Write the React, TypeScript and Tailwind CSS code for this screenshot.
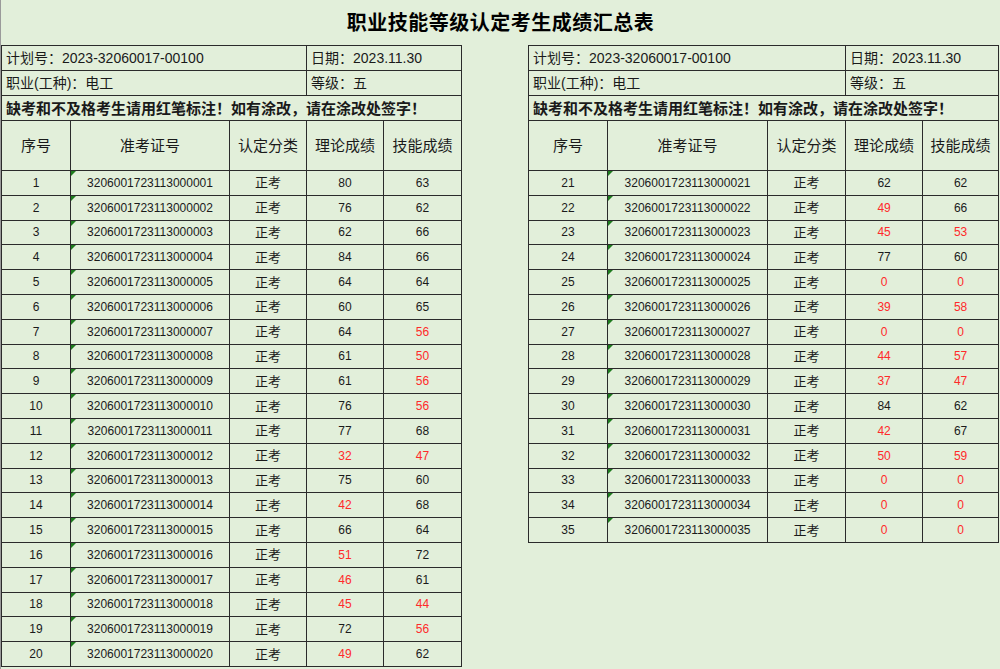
import React from "react";

const left: [number, number, number][] = [
  [1, 80, 63], [2, 76, 62], [3, 62, 66], [4, 84, 66], [5, 64, 64], [6, 60, 65], [7, 64, 56], [8, 61, 50],
  [9, 61, 56], [10, 76, 56], [11, 77, 68], [12, 32, 47], [13, 75, 60], [14, 42, 68], [15, 66, 64], [16, 51, 72],
  [17, 46, 61], [18, 45, 44], [19, 72, 56], [20, 49, 62],
];
const right: [number, number, number][] = [
  [21, 62, 62], [22, 49, 66], [23, 45, 53], [24, 77, 60], [25, 0, 0], [26, 39, 58], [27, 0, 0], [28, 44, 57],
  [29, 37, 47], [30, 84, 62], [31, 42, 67], [32, 50, 59], [33, 0, 0], [34, 0, 0], [35, 0, 0],
];

const cell = "border border-[#2b2b2b] text-center p-0 leading-none whitespace-nowrap";
const info = "border border-[#2b2b2b] px-1 p-0 leading-none whitespace-nowrap";

function Sheet({ rows, widths }: { rows: [number, number, number][]; widths: number[] }) {
  return (
    <table className="border-collapse table-fixed text-[#1a1a1a]" style={{ width: widths.reduce((a, b) => a + b, 0) }}>
      <colgroup>
        {widths.map((w, i) => <col key={i} style={{ width: w }} />)}
      </colgroup>
      <tbody>
        <tr className="h-[25px] text-[14px]">
          <td colSpan={3} className={info}>计划号：2023-32060017-00100</td>
          <td colSpan={2} className={info}>日期：2023.11.30</td>
        </tr>
        <tr className="h-[25px] text-[14px]">
          <td colSpan={3} className={info}>职业(工种)：电工</td>
          <td colSpan={2} className={info}>等级：五</td>
        </tr>
        <tr className="h-[25px] text-[15px] font-bold">
          <td colSpan={5} className={info}>缺考和不及格考生请用红笔标注！如有涂改，请在涂改处签字！</td>
        </tr>
        <tr className="h-[50px] text-[15px]">
          <td className={cell}>序号</td>
          <td className={cell}>准考证号</td>
          <td className={cell}>认定分类</td>
          <td className={cell}>理论成绩</td>
          <td className={cell}>技能成绩</td>
        </tr>
        {rows.map(([n, a, b]) => (
          <tr key={n} className="h-[24.8px] text-[12px]">
            <td className={cell}>{n}</td>
            <td className={cell + " relative"}>
              <span className="absolute left-0 top-0 w-0 h-0 border-t-[5px] border-r-[5px] border-t-[#1e7b1e] border-r-transparent" />
              3206001723113{String(n).padStart(6, "0")}
            </td>
            <td className={cell + " text-[13px]"}>正考</td>
            <td className={cell + (a < 60 ? " text-[#ff2a2a]" : "")}>{a}</td>
            <td className={cell + (b < 60 ? " text-[#ff2a2a]" : "")}>{b}</td>
          </tr>
        ))}
      </tbody>
    </table>
  );
}

export default function App() {
  return (
    <div
      className="w-[1000px] h-[669px] overflow-hidden bg-[#e2efda] border-l border-[#9a9a9a]"
      style={{ fontFamily: '"Liberation Sans","Noto Sans CJK SC",sans-serif' }}
    >
      <div className="h-[45px] flex items-center justify-center text-[20px] font-bold tracking-wide">
        职业技能等级认定考生成绩汇总表
      </div>
      <div className="flex items-start">
        <Sheet rows={left} widths={[69, 159, 77, 77, 78]} />
        <div className="w-[66px] shrink-0" />
        <Sheet rows={right} widths={[79, 160, 78, 77, 76]} />
      </div>
    </div>
  );
}
